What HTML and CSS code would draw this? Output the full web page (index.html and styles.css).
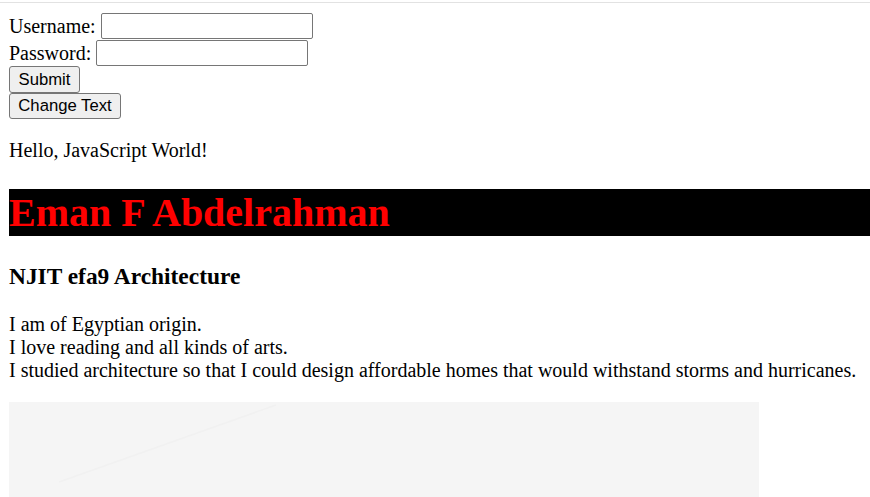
FILE: index.html
```html
<!DOCTYPE html>
<html lang="en">
<head>
<meta charset="utf-8">
<title>Eman F Abdelrahman</title>
<link rel="stylesheet" href="styles.css">
</head>
<body>
<div class="topline"></div>
<div class="page">
  <form class="login">
    <div class="row"><label for="u">Username:</label> <input id="u" type="text" class="field field-user"></div>
    <div class="row"><label for="p">Password:</label> <input id="p" type="password" class="field field-pass"></div>
    <div class="row"><button type="button" class="btn btn-submit">Submit</button></div>
    <div class="row"><button type="button" class="btn btn-change">Change Text</button></div>
  </form>
  <p class="hello">Hello, JavaScript World!</p>
  <h1 class="name">Eman F Abdelrahman</h1>
  <h3 class="sub">NJIT efa9 Architecture</h3>
  <p class="about">I am of Egyptian origin.<br>I love reading and all kinds of arts.<br>I studied architecture so that I could design affordable homes that would withstand storms and hurricanes.</p>
  <div class="picture">
    <svg class="picture-svg" width="750" height="100" viewBox="0 0 750 100">
      <path d="M50 80 L267 3" stroke="#f1f1f1" stroke-width="1.5" fill="none"/>
    </svg>
  </div>
</div>
</body>
</html>
```
FILE: styles.css
```css
html, body {
  margin: 0;
  padding: 0;
  background: #ffffff;
  overflow: hidden;
}
body {
  font-family: "Liberation Serif", "Times New Roman", serif;
  font-size: 20px;
  line-height: 23px;
  color: #000000;
}
.topline {
  margin-top: 2px;
  height: 1px;
  background: #e2e2e2;
}
.page {
  padding: 10px 0 0 9px;
}
.login {
  display: flex;
  flex-direction: column;
  margin: 0;
}
.row {
  height: 26.5px;
  display: flex;
  align-items: flex-start;
  white-space: nowrap;
}
.row label {
  line-height: 26px;
  margin-right: 5px;
}
.field {
  box-sizing: border-box;
  height: 26px;
  border: 1px solid #767676;
  border-radius: 2px;
  background: #ffffff;
  padding: 1px 2px;
  margin: 0;
  font-family: "Liberation Sans", Arial, sans-serif;
  font-size: 16.7px;
}
.field-user { width: 212px; }
.field-pass { width: 212px; }
.btn {
  box-sizing: border-box;
  height: 27px;
  margin: 0;
  padding: 0 8px;
  border: 1px solid #767676;
  border-radius: 3px;
  background: #efefef;
  color: #000000;
  font-family: "Liberation Sans", Arial, sans-serif;
  font-size: 16.7px;
  line-height: 24px;
}
.btn-submit { width: 71px; }
.btn-change { width: 112px; height: 26px; }
.hello {
  margin: 20px 0;
}
.name {
  margin: 26.8px 0;
  font-size: 40px;
  line-height: 47px;
  font-weight: bold;
  background: #000000;
  color: #ff0000;
}
.sub {
  margin: 26.8px 0 23.4px;
  font-size: 23.4px;
  line-height: 27px;
  font-weight: bold;
}
.about {
  margin: 23.4px 0 20px;
}
.picture {
  width: 750px;
  height: 100px;
  background: #f5f5f5;
}
.picture-svg {
  display: block;
}
```
